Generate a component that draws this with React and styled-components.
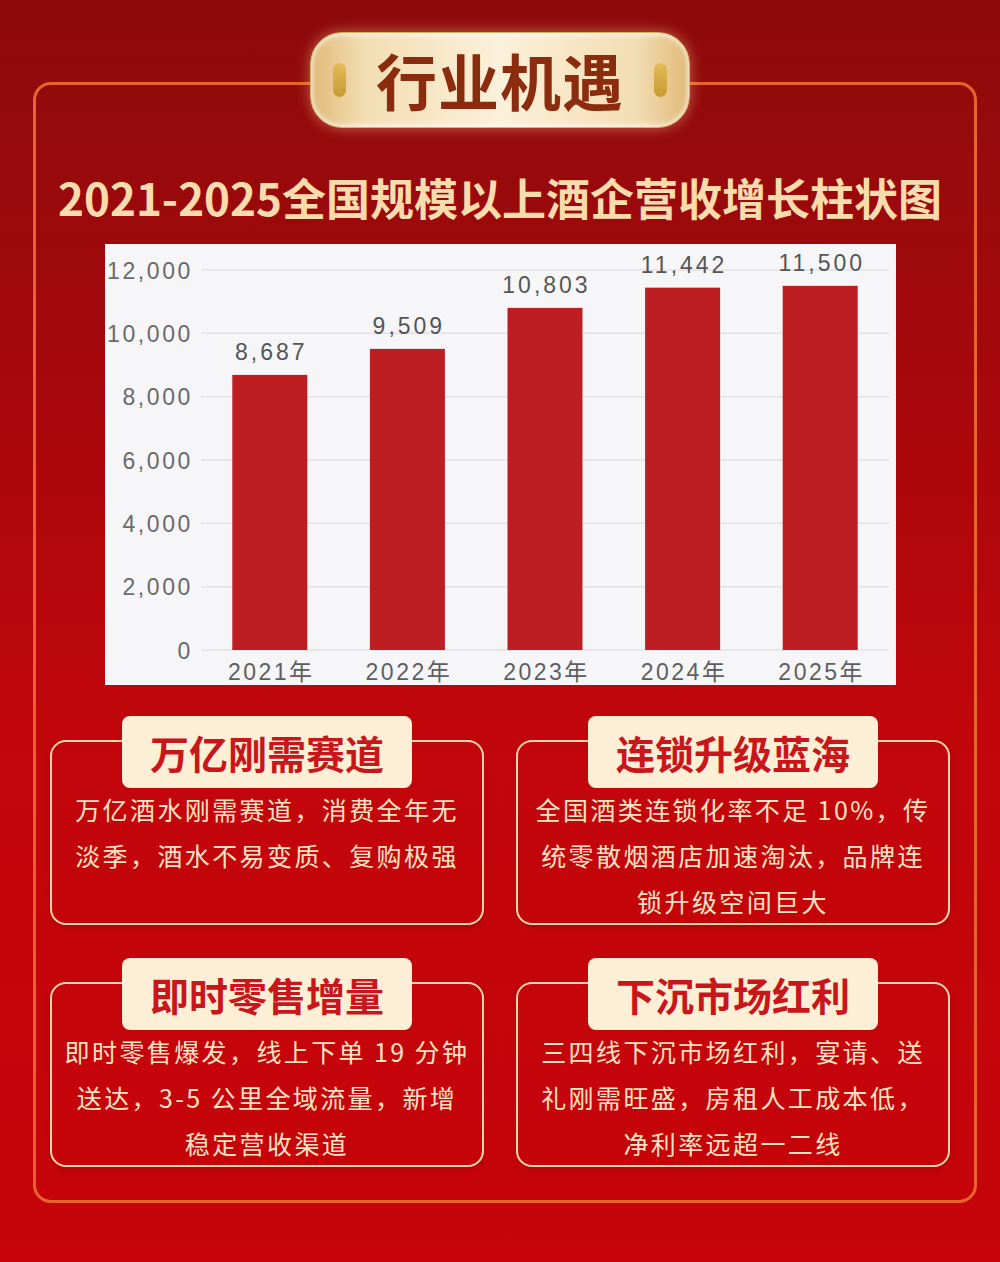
import React from 'react';
import styled, {createGlobalStyle} from 'styled-components';

const GlobalStyle = createGlobalStyle`
  html, body {
    margin: 0;
    padding: 0;
  }
  body {
    font-family: "Noto Sans CJK SC", "Noto Sans", sans-serif;
  }
`;

const Page = styled.div`
  width: 1000px;
  height: 1262px;
  padding-top: 82px;
  box-sizing: border-box;
  background: linear-gradient(180deg, #8d0b0b 0%, #a6080b 30%, #c2060b 60%, #c6040a 100%);
  overflow: hidden;
`;

const Frame = styled.div`
  width: 944px;
  height: 1121px;
  margin-left: 33px;
  box-sizing: border-box;
  border: 3px solid #e8642c;
  border-radius: 18px;
  padding: 0 24px 0 14px;
  display: flex;
  flex-direction: column;
  align-items: center;
`;

const Badge = styled.div`
  margin-top: -53px;
  width: 380px;
  height: 96px;
  box-sizing: border-box;
  border-radius: 32px;
  border: 1px solid #d9b068;
  background: linear-gradient(90deg, #dfb977 0%, #f3ddb2 14%, #fbf1da 50%, #f3ddb2 86%, #dfb977 100%);
  box-shadow: 0 0 14px rgba(255, 214, 160, 0.45), inset 0 2px 6px rgba(255, 255, 255, 0.7),
    inset 0 -2px 6px rgba(255, 255, 255, 0.6);
  display: flex;
  align-items: center;
  justify-content: space-between;
  padding: 0 22px;
`;

const BadgeDot = styled.span`
  width: 13px;
  height: 34px;
  border-radius: 7px;
  background: linear-gradient(180deg, #e2bb55, #c99a34);
`;

const BadgeText = styled.span`
  font-size: 61px;
  font-weight: 700;
  color: #8a2c0d;
  letter-spacing: 1px;
  line-height: 1;
  margin-top: -2px;
`;

const Title = styled.h1`
  margin: 44px 0 0;
  font-size: 44px;
  line-height: 50px;
  font-weight: 700;
  color: #f9dcae;
  white-space: nowrap;
`;

const ChartBox = styled.div`
  margin-top: 22px;
  width: 791px;
  height: 441px;
  background: #f6f6f8;
  flex-shrink: 0;
  overflow: hidden;
`;

const Grid = styled.div`
  margin-top: 31px;
  width: 900px;
  display: grid;
  grid-template-columns: 434px 434px;
  column-gap: 32px;
  row-gap: 33px;
`;

const Item = styled.div`
  display: flex;
  flex-direction: column;
  align-items: center;
`;

const Label = styled.div`
  position: relative;
  z-index: 1;
  width: 290px;
  height: 72px;
  border-radius: 8px;
  background: #fcefd6;
  color: #c8161b;
  font-size: 39px;
  font-weight: 700;
  display: flex;
  align-items: center;
  justify-content: center;
  margin-bottom: -48px;
`;

const Card = styled.div`
  width: 100%;
  height: 185px;
  box-sizing: border-box;
  border: 2px solid #f6d6b2;
  border-radius: 16px;
  padding: 44px 0 0;
  box-shadow: 0 3px 4px rgba(120, 0, 0, 0.25);
  color: #fde3c4;
  font-size: 25px;
  line-height: 46px;
  letter-spacing: 2.4px;
  text-align: center;
  white-space: nowrap;
`;

const items = [
  {title: '万亿刚需赛道', lines: ['万亿酒水刚需赛道，消费全年无', '淡季，酒水不易变质、复购极强']},
  {title: '连锁升级蓝海', lines: ['全国酒类连锁化率不足 10%，传', '统零散烟酒店加速淘汰，品牌连', '锁升级空间巨大']},
  {title: '即时零售增量', lines: ['即时零售爆发，线上下单 19 分钟', '送达，3-5 公里全域流量，新增', '稳定营收渠道']},
  {title: '下沉市场红利', lines: ['三四线下沉市场红利，宴请、送', '礼刚需旺盛，房租人工成本低，', '净利率远超一二线']},
];

const data = [
  {year: '2021年', value: 8687},
  {year: '2022年', value: 9509},
  {year: '2023年', value: 10803},
  {year: '2024年', value: 11442},
  {year: '2025年', value: 11500},
];

const ticks = [0, 2000, 4000, 6000, 8000, 10000, 12000];

const Chart = () => {
    const top = 26;
    const base = 406;
    const left = 96;
    const right = 784;
    const step = (right - left) / data.length;
    const y = (v) => base - (v / 12000) * (base - top);
    const fmt = (v) => v.toLocaleString('en-US');

    return (
        <svg width="791" height="441" viewBox="0 0 791 441"
             fontFamily='"Liberation Sans", Arial, "Noto Sans CJK SC", sans-serif' fontSize="23">
            {ticks.map((t) => (
                <g key={t}>
                    <line x1={left} x2={right} y1={y(t)} y2={y(t)} stroke="#e2e2e4" strokeWidth="1.5"/>
                    <text x={88} y={y(t) + 8.5} textAnchor="end" fill="#6a6a6a" letterSpacing="2.6">{fmt(t)}</text>
                </g>
            ))}
            {data.map((d, i) => {
                const cx = left + step * (i + 0.5);
                const h = y(d.value);
                return (
                    <g key={d.year}>
                        <rect x={cx - 37.5} y={h} width="75" height={base - h} fill="#bc1e22"/>
                        <text x={cx + 1.5} y={h - 15} textAnchor="middle" fill="#555" letterSpacing="3">{fmt(d.value)}</text>
                        <text x={cx + 1.5} y={436} textAnchor="middle" fill="#5e5e5e" letterSpacing="2.5">{d.year}</text>
                    </g>
                );
            })}
        </svg>
    );
};

const App = () => {
    return (
        <>
            <GlobalStyle/>
            <Page>
                <Frame>
                    <Badge>
                        <BadgeDot/>
                        <BadgeText>行业机遇</BadgeText>
                        <BadgeDot/>
                    </Badge>
                    <Title>2021-2025全国规模以上酒企营收增长柱状图</Title>
                    <ChartBox>
                        <Chart/>
                    </ChartBox>
                    <Grid>
                        {items.map((item) => (
                            <Item key={item.title}>
                                <Label>{item.title}</Label>
                                <Card>
                                    {item.lines.map((l) => <div key={l}>{l}</div>)}
                                </Card>
                            </Item>
                        ))}
                    </Grid>
                </Frame>
            </Page>
        </>
    );
};

export default App;
